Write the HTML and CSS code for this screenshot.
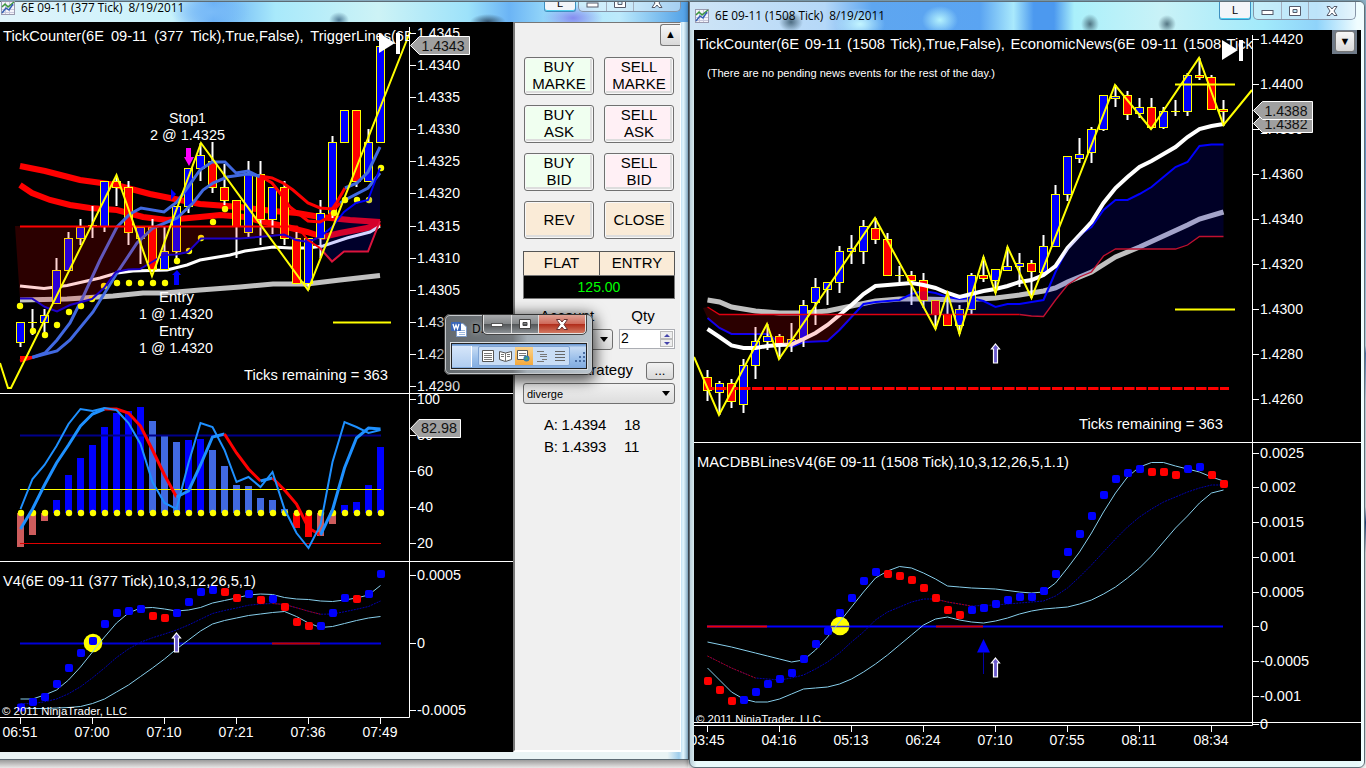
FILE: index.html
```
<!DOCTYPE html>
<html lang="en">

<head>
  <meta charset="utf-8">
  <title>6E 09-11 Charts</title>
  <link rel="stylesheet" href="styles.css">
</head>

<body>
  <div class="desktop">

    <div class="window window-left">
      <div class="titlebar">
        <svg class="app-icon" width="14" height="14" viewBox="0 0 14 14">
          <rect x=".5" y=".5" width="13" height="13" fill="#f4f4fa" stroke="#9a9ab0" />
          <path d="M1 4.500H13M1 8.500H13M1 11.500H13M4.500 1V13M8.500 1V13" stroke="#c9c9dd" />
          <path d="M1 6L4 3L7 6L13 1" fill="none" stroke="#3c9a3c" stroke-width="1.500" />
          <path d="M1 12L5 7L8 9L12 3" fill="none" stroke="#3460b4" stroke-width="1.500" />
        </svg>
        <span class="title">6E 09-11 (377 Tick)&nbsp; 8/19/2011</span>
        <div class="link-btn">L</div>
        <div class="controls">
          <span><svg width="14" height="12"><rect x="2" y="6" width="11" height="4" fill="#fff" stroke="#555a6a" /></svg></span>
          <span><svg width="14" height="12"><path d="M1.500 1.500H12.500V10.500H1.500ZM5 4.500V7.500H9V4.500Z" fill="#fff" stroke="#555a6a" /></svg></span>
          <span class="wide"><svg width="14" height="12"><path d="M2 1.500H5L7 4L9 1.500H12L9 6L12 10.500H9L7 8L5 10.500H2L5 6Z" fill="#fff" stroke="#555a6a" /></svg></span>
        </div>
      </div>
      <div class="window-body">
        <svg class="chart" id="chart377" width="513" height="730" viewBox="0 22 513 730"></svg>
        <div class="trader">
          <div class="scroll-row"><div class="arrow-btn">&#9650;</div></div>
          <div class="order-grid">
            <div class="order buy">BUY<br>MARKE</div>
            <div class="order sell">SELL<br>MARKE</div>
            <div class="order buy">BUY<br>ASK</div>
            <div class="order sell">SELL<br>ASK</div>
            <div class="order buy">BUY<br>BID</div>
            <div class="order sell">SELL<br>BID</div>
            <div class="order flat">REV</div>
            <div class="order flat">CLOSE</div>
          </div>
          <div class="position">
            <div>FLAT</div>
            <div>ENTRY</div>
          </div>
          <div class="pnl">125.00</div>
          <div class="field-labels">
            <span>Account</span>
            <span>Qty</span>
          </div>
          <div class="fields">
            <div class="select account"><span></span><i></i></div>
            <div class="qty">
              <span>2</span>
              <div class="spin"><b class="up"></b><b class="down"></b></div>
            </div>
          </div>
          <div class="strategy-row">
            <span>ATM Strategy</span>
            <div class="dots-btn">...</div>
          </div>
          <div class="select strategy"><span>diverge</span><i></i></div>
          <div class="quotes">
            <span>A: 1.4394</span><span>18</span>
            <span>B: 1.4393</span><span>11</span>
          </div>
        </div>
      </div>
    </div>

    <div class="window window-right">
      <div class="titlebar">
        <svg class="app-icon" width="14" height="14" viewBox="0 0 14 14">
          <rect x=".5" y=".5" width="13" height="13" fill="#f4f4fa" stroke="#9a9ab0" />
          <path d="M1 4.500H13M1 8.500H13M1 11.500H13M4.500 1V13M8.500 1V13" stroke="#c9c9dd" />
          <path d="M1 6L4 3L7 6L13 1" fill="none" stroke="#3c9a3c" stroke-width="1.500" />
          <path d="M1 12L5 7L8 9L12 3" fill="none" stroke="#3460b4" stroke-width="1.500" />
        </svg>
        <span class="title">6E 09-11 (1508 Tick)&nbsp; 8/19/2011</span>
        <div class="link-btn">L</div>
        <div class="controls">
          <span><svg width="14" height="12"><rect x="2" y="5.500" width="11" height="4" fill="#fff" stroke="#555a6a" /></svg></span>
          <span><svg width="14" height="12"><path d="M1.500 1.500H12.500V10.500H1.500ZM5 4.500V7.500H9V4.500Z" fill="#fff" stroke="#555a6a" /></svg></span>
          <span class="wide"><svg width="14" height="12"><path d="M2 1.500H5L7 4L9 1.500H12L9 6L12 10.500H9L7 8L5 10.500H2L5 6Z" fill="#fff" stroke="#555a6a" /></svg></span>
        </div>
      </div>
      <div class="window-body">
        <svg class="chart" id="chart1508" width="667" height="731" viewBox="694 30 667 731"></svg>
        <div class="chart-menu"><div class="arrow-btn">&#9660;</div></div>
      </div>
    </div>

    <div class="window-word">
      <div class="word-top">
        <svg width="16" height="16" viewBox="0 0 16 16">
          <path d="M5.500 2.500H12L15.500 6V15.500H5.500Z" fill="#fff" stroke="#7d9cc9" />
          <path d="M8 9.500H14M8 11.500H14M8 13.500H14" stroke="#9db8dd" />
          <rect x="0" y="1" width="10" height="9" rx="1" fill="#3a66b8" />
          <path d="M2 3L3.500 8L5 4L6.500 8L8 3" fill="none" stroke="#fff" stroke-width="1.300" />
        </svg>
        <span class="word-title">D.</span>
        <div class="word-controls">
          <span><svg width="12" height="10"><rect x=".5" y="4.500" width="11" height="3" fill="#fff" stroke="#555" /></svg></span>
          <span><svg width="12" height="10"><path d="M.5 .5H11.500V9.500H.5ZM4 3.500V6.500H8V3.500Z" fill="#fff" stroke="#444" /></svg></span>
          <span class="close"><svg width="12" height="11"><path d="M.5 .5H4L6 3L8 .5H11.500L8 5.500L11.500 10.500H8L6 8L4 10.500H.5L4 5.500Z" fill="#fff" stroke="#633" /></svg></span>
        </div>
      </div>
      <div class="word-status">
        <div class="word-tab"></div>
        <div class="views">
          <span><svg width="12" height="12"><path d="M.5 .5H11.500V11.500H.5Z" fill="#fff" stroke="#555" /><path d="M2 3.500H10M2 5.500H10M2 7.500H10M2 9.500H10" stroke="#777" /></svg></span>
          <span><svg width="13" height="12"><path d="M.5 1.500L6.500 3L12.500 1.500V9.500L6.500 11.500L.5 9.500Z" fill="#fff" stroke="#555" /><path d="M6.500 3V11M2 4.500H5M2 6.500H5M8 4.500H11M8 6.500H11" stroke="#777" /></svg></span>
          <span class="on"><svg width="13" height="12"><path d="M.5 .5H10.500V9.500H.5Z" fill="#fff" stroke="#555" /><path d="M2 3.500H9M2 5.500H9" stroke="#777" /><circle cx="9.500" cy="8.500" r="3" fill="#2f7fb0" /><path d="M8 8l2-1 1 2-2 1z" fill="#4fae5a" /></svg></span>
          <span><svg width="12" height="12"><path d="M1 1.500H8M4 4.500H11M4 6.500H11M6 9.500H11M1 11.500H8" stroke="#777" /></svg></span>
          <span><svg width="12" height="12"><path d="M1 1.500H11M1 4.500H11M1 7.500H11M1 10.500H11" stroke="#666" /></svg></span>
        </div>
        <svg class="grip" width="12" height="12"><path d="M8 0h2v2h-2zM4 4h2v2h-2zM8 4h2v2h-2zM0 8h2v2h-2zM4 8h2v2h-2zM8 8h2v2h-2z" fill="#4a6ea3" /></svg>
      </div>
    </div>

  </div>
  <script src="charts.js"></script>
</body>

</html>
```

FILE: styles.css
```
body {
  margin: 0;
  font-family: "Liberation Sans", Arial, sans-serif;
  font-size: 14px;
  color: #000;
}

.desktop {
  position: relative;
  width: 1366px;
  height: 768px;
  overflow: hidden;
  background: linear-gradient(#8fb4c8 0, #6ba4d8 20%, #bfe0ee 45%, #4a7ab5 46%, #c5dbe8 52%, #d5e2e6 66%, #17427e 68%, #d9e0e2 72%, #e4e4e4 96%, #f6f6f6 100%);
}

/* windows */

.window {
  position: absolute;
  box-sizing: border-box;
  display: flex;
  flex-direction: column;
}

.window-left {
  left: -1px;
  top: 1px;
  width: 690px;
  height: 759px;
  border: 1px solid #5d6b74;
  border-right-color: #4d5a66;
  background: linear-gradient(90deg, #eaf4f5 0, #eaf4f5 97%, #9fcdec 98.7%, #e6f7fd 99.3%, #9bc8e6 100%);
  box-shadow: 0 3px 6px rgba(0, 0, 0, .45);
}

.window-left::after {
  content: "";
  position: absolute;
  left: 0;
  right: 0;
  bottom: -10px;
  height: 9px;
  background: linear-gradient(#9b9b9b, #f3f1f1);
}

.window-right {
  left: 689px;
  top: 1px;
  width: 676px;
  height: 767px;
  padding: 0 3px 0 4px;
  border: 1px solid #5f6f78;
  border-radius: 0 6px 6px 6px;
  background: linear-gradient(90deg, #b9cfd9 0, #e9fafb 1%, #e7f9fa 99%, #f1ffff 100%);
  box-shadow: -1px 0 4px rgba(0, 0, 0, .4);
}

.titlebar {
  display: flex;
  flex: none;
  height: 20px;
  box-sizing: border-box;
  background:
    radial-gradient(ellipse 40px 16px at 210px 10px, #7bbcf8, transparent),
    radial-gradient(ellipse 10px 8px at 339px 18px, #527f9a, transparent),
    radial-gradient(ellipse 18px 8px at 488px 20px, #31506b, transparent),
    radial-gradient(ellipse 30px 14px at 573px 16px, #858cf0, transparent),
    linear-gradient(90deg, #e2f4fb 0, #c8f2fb 25%, #62aaf4 31%, #a8e9fb 40%, #cdf3f6 55%, #9de2fa 68%, #6bb4f5 74%, #a9e8fb 82%, #bdeafc 90%, #4f9fe6 100%);
}

.window-right .titlebar {
  height: 28px;
  margin: 0 -3px 0 -4px;
  padding: 0 8px 0 5px;
  border-radius: 0 5px 0 0;
  background:
    radial-gradient(ellipse 12px 10px at 101px 20px, #4d6c82, transparent),
    radial-gradient(ellipse 25px 16px at 170px 22px, #c3f5ff, transparent),
    radial-gradient(ellipse 18px 14px at 250px 18px, #b4f2fd, transparent),
    radial-gradient(ellipse 9px 10px at 400px 22px, #4f7482, transparent),
    radial-gradient(ellipse 9px 9px at 477px 22px, #547683, transparent),
    linear-gradient(90deg, #cfe5f6 0, #b5d8f8 20%, #5ea6f0 27%, #5aa4f2 43%, #a9e9fc 48%, #4c99ef 51%, #4c99ef 54%, #aaf0fb 57%, #c9f2f7 70%, #a2eafb 85%, #8fd3fa 93%, #f0fdff 99%);
}

.app-icon {
  margin: -1px 6px 0 1px;
}

.window-right .app-icon {
  margin: 7px 6px 0 0;
}

.title {
  flex: 1;
  margin-top: -3px;
  font-family: "Open Sans", "Noto Sans", sans-serif;
  font-size: 11.8px;
  line-height: 16px;
  letter-spacing: -.02px;
  white-space: nowrap;
}

.window-right .title {
  margin-top: 5px;
}

.link-btn {
  box-sizing: border-box;
  width: 32px;
  height: 10px;
  margin-right: 2px;
  border: 1px solid #3d8fc0;
  border-top: 0;
  box-shadow: inset 0 -1px 0 #4fd0f0;
  border-radius: 0 0 3px 3px;
  background: #f3f5f9;
  font-size: 11px;
  line-height: 3px;
  text-align: center;
}

.window-left .link-btn {
  overflow: hidden;
}

.window-right .link-btn {
  height: 18px;
  line-height: 16px;
}

.controls {
  display: flex;
  box-sizing: border-box;
  width: 103px;
  height: 10px;
  margin-right: 7px;
  overflow: hidden;
  border: 1px solid #8795a8;
  border-top: 0;
  border-radius: 0 0 5px 5px;
  background: rgba(225, 240, 250, .55);
}

.window-right .controls {
  height: 18px;
  margin-right: 0;
}

.controls span {
  display: flex;
  flex: 27;
  justify-content: center;
  align-items: center;
  border-right: 1px solid #a3afbf;
}

.controls .wide {
  flex: 46;
  border: 0;
}

.window-left .controls span {
  align-items: flex-end;
  padding-bottom: 2px;
}

.window-left .controls svg {
  flex: none;
}

.window-body {
  position: relative;
  display: flex;
  height: 730px;
}

.chart {
  display: block;
  flex: none;
  background: #000;
}

/* order entry panel */

.trader {
  box-sizing: border-box;
  width: 168px;
  padding: 1px 0 0 8px;
  border-left: 2px solid #777;
  border-top: 1px solid #777;
  border-right: 1px solid #fff;
  border-bottom: 2px solid #fff;
  background: #f0f0f0;
}

.scroll-row {
  display: flex;
  justify-content: flex-end;
  height: 33px;
}

.arrow-btn {
  box-sizing: border-box;
  width: 20px;
  height: 22px;
  border: 1px solid #777;
  border-right: 0;
  border-radius: 3px 0 0 3px;
  background: linear-gradient(#f7f7f7, #d9d9d9);
  font-size: 11px;
  line-height: 19px;
  text-align: center;
}

.order-grid {
  display: grid;
  grid-template-columns: 70px 70px;
  gap: 10px;
  padding-left: 1px;
}

.order {
  display: flex;
  box-sizing: border-box;
  height: 38px;
  padding-bottom: 2px;
  justify-content: center;
  align-items: center;
  border: 1px solid #707070;
  border-radius: 3px;
  box-shadow: inset 0 0 0 1px #f8f8f8, inset -1px -1px 0 2px #ddd;
  font-size: 15px;
  line-height: 17px;
  text-align: center;
}

.buy {
  background: #f0fff0;
}

.sell {
  background: #fff0f5;
}

.flat {
  background: #faebd7;
}

.position {
  display: grid;
  grid-template-columns: 75px 75px;
  box-sizing: border-box;
  width: 152px;
  height: 24px;
  margin-top: 12px;
  border: 1px solid #555;
  border-bottom: 0;
  background: #faebd7;
  font-size: 15px;
  line-height: 22px;
  text-align: center;
}

.position div + div {
  border-left: 1px solid #555;
}

.pnl {
  box-sizing: border-box;
  width: 152px;
  height: 24px;
  border: 1px solid #777;
  background: #000;
  color: #0f0;
  line-height: 23px;
  text-align: center;
}

.field-labels {
  display: grid;
  grid-template-columns: 88px 64px;
  margin-top: 7px;
  height: 23px;
  font-size: 15px;
  line-height: 20px;
  text-align: center;
}

.fields {
  display: flex;
  gap: 6px;
}

.select {
  display: flex;
  box-sizing: border-box;
  height: 21px;
  align-items: center;
  justify-content: space-between;
  padding: 0 4px 0 3px;
  border: 1px solid #707070;
  border-radius: 3px;
  background: linear-gradient(#f2f2f2, #ddd);
}

.select i {
  border: 4px solid transparent;
  border-top: 5px solid #000;
  border-bottom: 0;
}

.account {
  width: 90px;
}

.strategy {
  width: 152px;
  font-size: 11px;
}

.qty {
  display: flex;
  box-sizing: border-box;
  width: 56px;
  height: 20px;
  justify-content: space-between;
  padding: 1px 1px 1px 1px;
  border: 1px solid #abadb3;
  background: #fff;
  line-height: 15px;
}

.spin b {
  display: flex;
  box-sizing: border-box;
  width: 13px;
  height: 8px;
  justify-content: center;
  align-items: center;
  border: 1px solid #bbb;
  background: #eee;
}

.spin b::after {
  content: "";
  border: 3px solid transparent;
}

.up::after {
  margin-top: -3px;
  border-bottom-color: #44a !important;
}

.down::after {
  margin-bottom: -3px;
  border-top-color: #44a !important;
}

.strategy-row {
  display: flex;
  width: 151px;
  margin-top: 12px;
  height: 21px;
  justify-content: flex-end;
  gap: 13px;
  font-size: 15px;
  line-height: 16px;
}

.dots-btn {
  box-sizing: border-box;
  width: 28px;
  height: 18px;
  border: 1px solid #707070;
  border-radius: 3px;
  background: linear-gradient(#f2f2f2, #d8d8d8);
  font-size: 13px;
  line-height: 15px;
  text-align: center;
}

.quotes {
  display: grid;
  grid-template-columns: 80px 40px;
  margin: 10px 0 0 21px;
  font-size: 15px;
  letter-spacing: -.25px;
  line-height: 22px;
  white-space: nowrap;
}

.chart-menu {
  position: absolute;
  right: 4px;
  top: 0;
  padding: 1px 2px 2px 3px;
  background: #6f7a88;
}

.chart-menu .arrow-btn {
  border-right: 1px solid #777;
  border-radius: 3px;
  height: 21px;
}

/* minimised word window */

.window-word {
  position: absolute;
  left: 444px;
  top: 314px;
  box-sizing: border-box;
  width: 149px;
  height: 61px;
  padding: 0 6px;
  border: 1px solid #e1e4e6;
  outline: 1px solid #333;
  outline-offset: -1px;
  border-radius: 6px;
  background: linear-gradient(90deg, #646a6e 0, #74797d 46%, #a4aeb6 56%, #b9c4cc 100%);
  box-shadow: inset 0 0 0 1px #c5c9cc, 0 3px 14px 3px rgba(0, 0, 0, .65);
}

.word-top {
  display: flex;
  height: 28px;
}

.word-top > svg {
  flex: none;
  margin: 6px 5px 0 0;
}

.word-title {
  flex: none;
  width: 11px;
  margin-top: 5px;
  font-family: "Open Sans", sans-serif;
  font-size: 12px;
  line-height: 17px;
  text-shadow: 0 0 5px #ccc;
}

.word-controls {
  display: flex;
  flex: none;
  box-sizing: border-box;
  width: 103px;
  height: 19px;
  overflow: hidden;
  border: 1px solid #e3e3e3;
  border-top: 0;
  outline: 1px solid #444;
  border-radius: 0 0 4px 4px;
  background: linear-gradient(#a9abad, #85888a 48%, #515456 50%, #8b9094);
}

.word-controls span {
  display: flex;
  flex: 27;
  justify-content: center;
  align-items: center;
  border-right: 1px solid #ddd;
}

.word-controls .close {
  flex: 46;
  border: 0;
  background: linear-gradient(#dea295, #cf6a5b 48%, #b02a18 50%, #d27a63);
}

.word-status {
  display: flex;
  box-sizing: border-box;
  width: 136px;
  height: 26px;
  align-items: center;
  border: 1px solid #222;
  outline: 1px solid #d9dde0;
  background: linear-gradient(#5f8fcc, #c5daf3 15%, #9cc0ea 60%, #81abdf);
}

.word-tab {
  width: 20px;
  height: 21px;
  border-right: 1px solid #fff;
  background: linear-gradient(#d6e6fa, #b0cdf0);
}

.views {
  display: flex;
  height: 18px;
  margin-left: 6px;
  border: 1px solid #7ea3d4;
  border-radius: 2px;
  background: #c9ddf5;
}

.views span {
  display: flex;
  width: 18px;
  justify-content: center;
  align-items: center;
}

.views .on {
  background: linear-gradient(#fbd28a, #f5a93c);
}

.grip {
  margin: 4px 0 0 5px;
}
```

FILE: charts.js
```
const NS = "http://www.w3.org/2000/svg";

const make = (svg, tag, attrs, text) => {
  const el = document.createElementNS(NS, tag);
  for (const key in attrs) {
    el.setAttribute(key, attrs[key]);
  }
  if (text !== undefined) {
    el.textContent = text;
  }
  svg.appendChild(el);
  return el;
};

const line = (svg, points, color, width, extra) => {
  make(svg, "polyline", Object.assign({ points: points, fill: "none", stroke: color, "stroke-width": width }, extra));
};

const area = (svg, points, color) => make(svg, "polygon", { points: points, fill: color });

const label = (svg, x, y, text, width, extra) => {
  const attrs = { x: x, y: y, fill: "#fff", "font-size": 15, "font-family": "Liberation Sans, Arial, sans-serif" };
  if (width) {
    attrs.textLength = width;
    attrs.lengthAdjust = "spacingAndGlyphs";
  }
  make(svg, "text", Object.assign(attrs, extra), text);
};

const dot = (svg, x, y, color) => {
  make(svg, "rect", { x: x - 4, y: y - 4, width: 8, height: 8, rx: 2, fill: color });
};

// series given as one y value per bar
const series = (values, x0, from = 0) => values.map((y, i) => (x0 + (i + from) * 12) + "," + y).join(" ");

// series given as [bar, y] pairs
const sparse = (pairs, x0) => pairs.map(p => (x0 + p[0] * 12) + "," + p[1]).join(" ");

// [high, body top, body bottom, low, up]
const candles = (svg, rows, x0) => {
  rows.forEach((c, i) => {
    const x = x0 + i * 12;
    line(svg, `${x},${c[0]} ${x},${c[3]}`, "#fff", 2);
    if (c[2] - c[1] < 1) {
      line(svg, `${x - 4.5},${c[1] + .5} ${x + 4.5},${c[1] + .5}`, "#ff0", 1);
      return;
    }
    make(svg, "rect", {
      x: x - 4, y: c[1] + .5, width: 8, height: c[2] - c[1],
      fill: c[4] ? "#00f" : "#f00", stroke: "#ff0", "stroke-width": 1
    });
  });
};

const priceTag = (svg, x, y, text) => {
  make(svg, "polygon", {
    points: `${x},${y} ${x + 9},${y - 9} ${x + 59},${y - 9} ${x + 59},${y + 9} ${x + 9},${y + 9}`,
    fill: "#a0a0a0", stroke: "#fff"
  });
  label(svg, x + 11, y + 5, text, text.length > 5 ? 43 : 36, { fill: "#111" });
};

const upArrow = (svg, x, y) => {
  make(svg, "polygon", {
    points: `${x},${y} ${x + 4},${y + 5} ${x + 2},${y + 5} ${x + 2},${y + 19} ${x - 2},${y + 19} ${x - 2},${y + 5} ${x - 4},${y + 5}`,
    fill: "#6a5acd", stroke: "#fff", "stroke-width": 1.2
  });
};

const playIcon = (svg, x, y) => {
  area(svg, `${x},${y} ${x + 16},${y + 10} ${x},${y + 20}`, "#fff");
  make(svg, "rect", { x: x + 17, y: y, width: 4, height: 21, fill: "#fff" });
};

const ticks = (svg, x, rows) => {
  rows.forEach(r => {
    line(svg, `${x},${r[0] + .5} ${x + 6},${r[0] + .5}`, "#fff", 1);
    label(svg, x + 7, r[0] + 5, r[1], r[2]);
  });
};

const times = (svg, x0, y, list) => {
  list.forEach((t, i) => {
    const x = x0 + i * 72;
    line(svg, `${x},${y} ${x},${y + 6}`, "#fff", 1);
    label(svg, x - 18, y + 19, t, 35);
  });
};

// ---- 377 tick ----

const draw377 = () => {
  const svg = document.getElementById("chart377");
  const X = 20.5;

  line(svg, "20,166 45,171 80,180 116,185 150,194 170,198 200,204 240,207 273,211 297,213 320,217 350,220 380,222", "#f00", 6);
  line(svg, "20,185 32,193 50,200 70,205 90,208 117,210 143,217 167,220 200,217 220,215 245,217 260,221 283,226 307,232 323,237 340,233 367,228 380,223", "#f00", 6);
  line(svg, "20,300 67,299 113,296 143,293 165,293 200,290 240,287 273,284 307,284 340,280 380,275.5", "#c0c0c0", 5);
  line(svg, "20,286 44,288.500 67,285.500 100,278 117,273 133,271 167,270 187,265 200,260 230,255 245,251 273,247 290,248 308,248 323,246 347,238 370,232 380,226", "#fff", 3);

  candles(svg, [
    [322, 322, 342, 347, 1], [309, 322, 322, 335, 1], [309, 315, 322, 335, 1], [258, 270, 303, 303, 1],
    [232, 238, 270, 270, 1], [219, 227, 238, 245, 1], [206, 225, 225, 238, 1], [181, 181, 226, 232, 1],
    [176, 181, 187, 206, 0], [181, 187, 232, 245, 0], [227, 227, 238, 264, 1], [219, 227, 269, 269, 0],
    [227, 251, 269, 269, 1], [206, 206, 251, 264, 1], [168, 168, 206, 213, 1], [143, 155, 168, 181, 1],
    [142, 161, 187, 193, 0], [164, 187, 200, 205, 0], [200, 200, 226, 258, 0], [161, 174, 232, 238, 1],
    [161, 174, 219, 245, 0], [187, 187, 219, 234, 1], [181, 187, 238, 245, 0], [232, 238, 283, 283, 0],
    [238, 238, 283, 290, 1], [200, 213, 238, 258, 1], [136, 142, 213, 218, 1], [110, 110, 142, 142, 1],
    [110, 110, 181, 187, 0], [129, 142, 181, 181, 1], [46, 46, 142, 142, 1]
  ], X);

  line(svg, "32,357.500 45,353 57,340 70,323 83,297 100,260 117,227 130,214 141,208 164,212 177,202 188,187 200,170 212,162 225,162 236,173 248,171 260,177", "#4169e1", 3);
  line(svg, "32,357.500 57,351 70,340 93,312 117,273 137,243 153,228 177,218 193,203 203,190 213,183 227,177 248,174 260,176", "#4169e1", 3);
  line(svg, "260,176 272,178 283,183 293,190 308,203 320,208 332,209 337,202 345,188", "#f00", 3);
  line(svg, "260,176 272,183 283,197 290,207 308,221 320,222 327,218 340,203", "#f00", 3);
  line(svg, "345,188 357,183 368,172 380,147", "#4169e1", 3);
  line(svg, "340,203 345,200 368,188 380,173", "#4169e1", 3);
  line(svg, "20,357.500 32,357.500", "#f00", 3);
  line(svg, "20,361 32,357.500", "#f00", 3);

  [[20, 306], [33, 331], [45, 335], [57, 325], [69, 312], [81, 306], [92, 299], [104, 286], [117, 283], [129, 283],
    [141, 283], [153, 283], [165, 283], [177, 261], [189, 251], [201, 238], [213, 222], [225, 209],
    [334, 213], [345, 200], [357, 200], [369, 200], [381, 168]].forEach(p => {
    make(svg, "circle", { cx: p[0], cy: p[1], r: 3.2, fill: "#ff0" });
  });

  area(svg, "15,226 297,226 308,241 296,239 284,234 270,236 240,238 201,238 188,252 176,254.500 164,255 152,262 140,269 128,270 116,272 104,288 92,299 70,305 57,311.500 45,307 32,299 20,299", "rgba(255,0,0,.17)");
  area(svg, "308,241 320,237 332,227 344,212 356,203 368,200 380,170 380,221 368,251 344,251 332,261.500 320,247", "rgba(0,0,255,.17)");
  line(svg, "20,298.500 32,298.500 45,307 57,311.500 70,305 92,299 104,288 116,272 128,269.500 140,269 152,262 164,255 176,254.500 188,252 201,238.500 240,238.500 270,236 284,234.500 296,240 308,242 320,237", "#1e00c8", 2);
  line(svg, "320,237 332,227 344,212 356,203 368,200 380,168", "#00f", 2);
  line(svg, "20,226.500 297,226.500 308,240 320,248", "#f00", 2);
  line(svg, "320,248 332,261.500 344,251.500 368,251.500 380,221", "#dc143c", 2);
  line(svg, "0,363 8,388 11,388 116.500,175 152,276 201,143 308,290 410,32", "#ff0", 2);
  line(svg, "333,322.500 391,322.500", "#ff0", 2);

  area(svg, "186,148 191,148 191,157 194,157 189,166 184,157 186,157", "#f0f");
  area(svg, "171,189 176,194 171,200", "#00f");
  area(svg, "177,270 181,275 179,275 179,285 174,285 174,275 172,275", "#00f");

  label(svg, 169, 123, "Stop1", 37);
  label(svg, 150, 140, "2 @ 1.4325", 75);
  label(svg, 159, 302, "Entry", 35);
  label(svg, 139, 319, "1 @ 1.4320", 74);
  label(svg, 159, 336, "Entry", 35);
  label(svg, 139, 353, "1 @ 1.4320", 74);
  label(svg, 244, 380, "Ticks remaining = 363", 144);

  // header runs under the price axis
  const clip = make(svg, "clipPath", { id: "header377" });
  make(clip, "rect", { x: 0, y: 22, width: 409, height: 30 });
  const head = make(svg, "g", { "clip-path": "url(#header377)" });
  label(head, 3, 41, "TickCounter(6E 09-11 (377 Tick),True,False), TriggerLines(6E 09-11", 454, { "word-spacing": 3 });
  playIcon(svg, 379, 33);

  // stochastics panel
  line(svg, "0,393.500 513,393.500", "#fff", 1);
  line(svg, "0,561.500 513,561.500", "#fff", 1);
  const up = "#00f", weak = "#4169e1", down = "#f00", soft = "#cd5c5c";
  [[547, soft], [535, soft], [521, soft], [500, up], [475, up], [458, up], [445, up], [427, up], [413, up], [411, up],
    [407, up], [421, weak], [436, weak], [442, weak], [440, up], [439, up], [450, weak], [466, weak], [485, weak],
    [486, weak], [498, weak], [500, weak], [509, weak], [528, down], [537, down], [536, soft], [524, soft],
    [505, up], [502, up], [485, up], [447, up]].forEach((b, i) => {
    make(svg, "rect", { x: 17 + i * 12, y: Math.min(b[0], 513), width: 7, height: Math.abs(513 - b[0]), fill: b[1] });
  });
  line(svg, "20,435.500 381,435.500", "#00008b", 2);
  line(svg, "20,489.500 381,489.500", "#ff0", 1);
  line(svg, "20,543.500 381,543.500", "#e00000", 1);
  for (let i = 0; i < 31; i++) {
    make(svg, "circle", { cx: 21 + i * 12, cy: 513, r: 3.2, fill: "#ff0" });
  }
  const k = [529, 509, 485, 463, 445, 426, 414, 409, 409, 413, 426, 450, 475, 497, 491, 465, 437, 434, 453, 469, 481, 478, 490, 504, 528, 535, 510, 468, 438, 428, 429];
  [[0, 7, 0], [7, 13, 1], [13, 17, 0], [17, 20, 1], [20, 21, 0], [21, 25, 1], [25, 30, 0]].forEach(s => {
    line(svg, series(k.slice(s[0], s[1] + 1), X, s[0]), s[2] ? "#f00" : "#1e90ff", 3);
  });
  line(svg, series([509, 479, 465, 446, 424, 409, 411, 408, 410, 423, 444, 482, 503, 509, 463, 423, 427, 450, 482, 477, 487, 472, 509, 533, 548, 525, 462, 422, 427, 433, 430], X), "#1e90ff", 2);

  // macd panel
  const hi = [699, 699, 695, 690, 680, 667, 652, 637, 623, 613, 608, 607.5, 609, 611, 610, 607.5, 603, 600.5, 598, 595, 594, 594.5, 597.5, 599, 599.5, 601, 601.5, 600, 598, 595, 585.5];
  const lo = [708, 708.5, 708.5, 708, 707.5, 706.5, 703.5, 699, 692, 685, 676.5, 668, 659, 649, 640, 631, 624, 620.5, 618, 615.5, 614, 612.5, 611.5, 616.5, 623, 627.5, 626.5, 623.5, 620.5, 618, 616.5];
  const mid = hi.map((y, i) => (y + lo[i]) / 2);
  line(svg, "20,643.500 381,643.500", "#0000d8", 2);
  line(svg, "272,643.500 320,643.500", "#c00000", 2);
  make(svg, "circle", { cx: 93, cy: 643, r: 9.3, fill: "#ff0" });
  line(svg, series(mid, X), "#0000b0", 1, { "stroke-dasharray": "2 1" });
  line(svg, series(mid.slice(21, 26), X, 21), "#a00", 1, { "stroke-dasharray": "2 1" });
  line(svg, series(hi, X), "#87ceeb", 1);
  line(svg, series(lo, X), "#87ceeb", 1);
  const red = [11, 12, 17, 18, 20, 22, 23, 24, 28];
  [707.5, 702, 697, 684, 668, 653, 641, 624, 613, 611, 609, 616, 618, 613, 602, 592, 590, 592, 598, 594, 600, 599, 607, 622, 626, 626, 613, 598, 599, 594, 574].forEach((y, i) => {
    dot(svg, 21 + i * 12, y, red.includes(i) ? "#f00" : "#00f");
  });
  upArrow(svg, 176.5, 633);
  label(svg, 3, 586, "V4(6E 09-11 (377 Tick),10,3,12,26,5,1)", 253);
  label(svg, 2, 715, "© 2011 NinjaTrader, LLC", 125, { "font-size": 11 });

  line(svg, "409.500,27 409.500,717.500 0,717.500", "#fff", 1);
  ticks(svg, 410, [
    [33, "1.4345", 43], [65, "1.4340", 43], [97, "1.4335", 43], [129, "1.4330", 43], [161, "1.4325", 43],
    [193, "1.4320", 43], [226, "1.4315", 43], [258, "1.4310", 43], [290, "1.4305", 43], [322, "1.4300", 43],
    [354, "1.4295", 43], [386, "1.4290", 43], [399, "100", 23], [435, "80", 16], [471, "60", 16], [507, "40", 16],
    [543, "20", 16], [575, "0.0005", 44], [643, "0", 8], [710, "-0.0005", 49]
  ]);
  times(svg, 20.5, 718, ["06:51", "07:00", "07:10", "07:21", "07:36", "07:49"]);
  priceTag(svg, 410.5, 45.5, "1.4343");
  make(svg, "polygon", { points: "410.500,428.500 419,419.500 460.500,419.500 460.500,437.500 419,437.500", fill: "#a0a0a0", stroke: "#fff" });
  label(svg, 421, 433, "82.98", 36, { fill: "#111" });
};

// ---- 1508 tick ----

const draw1508 = () => {
  const svg = document.getElementById("chart1508");
  const X = 707.5;

  line(svg, sparse([[0, 300], [1, 302], [2, 307], [4, 311], [6, 313], [8, 313], [10, 311], [12, 306], [14, 301], [16, 299], [18, 299], [21, 300], [24, 298], [26, 295], [28, 291], [29, 288], [30, 282], [32, 272], [34, 257], [36, 247], [38, 236], [40, 225], [41, 219], [43, 212]], X), "#c0c0c0", 5);

  const blue = [[0, 318], [1, 328], [2, 334], [5, 334], [6, 342], [7, 347], [8, 342], [10, 341], [11, 330], [12, 317], [13, 304], [14, 302], [16, 300], [17, 294], [18, 291], [19, 293], [20, 297], [21, 299], [22, 298], [23, 301], [24, 307], [25, 304], [26, 304], [27, 302], [28, 300], [29, 272], [30, 248], [31, 235], [32, 227], [33, 210], [34, 200], [35, 200], [36, 194], [37, 187], [38, 177], [39, 167], [40, 162], [41, 146], [42, 144.5], [43, 144.5]];
  const base = [[0, 307], [1, 314.5], [26, 314.5], [27, 316], [28, 316.5], [29, 300], [30, 285], [31, 277], [32, 272], [33, 256], [34, 249], [39, 249], [40, 245], [41, 236.5], [43, 236.5]];
  line(svg, sparse(blue, X), "#00f", 2);

  candles(svg, [
    [370, 377, 390, 401, 0], [381, 383, 392, 415, 1], [379, 383, 401, 408, 0], [359, 365, 404, 413, 1],
    [327, 341, 365, 379, 1], [324, 336, 341, 350, 1], [334, 336, 343, 359, 0], [323, 339, 343, 352, 1],
    [300, 305, 338, 347, 1], [278, 287, 302, 325, 1], [282, 282, 289, 305, 1], [246, 251, 282, 293, 1],
    [235, 248, 251, 264, 1], [220, 226, 251, 264, 1], [218, 228, 239, 244, 0], [233, 239, 275, 275, 0],
    [266, 275, 275, 282, 1], [271, 275, 280, 305, 0], [273, 280, 300, 308, 0], [300, 300, 314, 329, 0],
    [293, 314, 325, 325, 0], [305, 309, 325, 334, 1], [273, 275, 309, 314, 1], [257, 275, 278, 282, 0],
    [269, 269, 280, 293, 1], [247, 266, 270, 271, 1], [253, 263, 266, 287, 1], [260, 263, 271, 298, 0],
    [235, 246, 272, 275, 1], [185, 194, 246, 246, 1], [156, 156, 194, 201, 1], [138, 154, 158, 163, 1],
    [127, 129, 152, 163, 1], [95, 95, 129, 131, 1], [85, 96, 98, 107, 1], [91, 95, 114, 120, 0],
    [98, 107, 113, 118, 1], [98, 107, 127, 129, 0], [107, 111, 127, 129, 1], [100, 111, 111, 116, 1],
    [73, 75, 111, 116, 1], [58, 75, 77, 80, 0], [75, 77, 109, 110, 0], [100, 109, 111, 126, 0]
  ], X);

  line(svg, series([329, 337, 345.5, 348, 348, 346, 345, 344.5, 339, 333, 325, 315, 305, 294, 286, 285, 284, 283, 285, 288, 293, 297, 294, 291, 289, 286, 282, 280, 275, 266, 248, 235, 222, 203, 188, 177, 167, 161, 154, 147, 137, 129, 126, 124], X), "#fff", 4);

  area(svg, "703,308 " + sparse(base.slice(0, 2), X) + " 854,314.500 " + sparse(blue.slice(0, 10).reverse(), X), "rgba(255,0,0,.17)");
  area(svg, "854,314.500 " + sparse(blue.slice(10), X) + " " + sparse(base.slice(2).reverse(), X), "rgba(0,0,255,.15)");
  line(svg, sparse(base.slice(0, 3), X), "#e00010", 1.3);
  line(svg, sparse(base.slice(2), X), "#c01030", 1.3);
  line(svg, "704,388.500 1229,388.500", "#f00", 3, { "stroke-dasharray": "10.500 1.500" });
  line(svg, "694,357 719,415 767,324 779,359 875,218 935.500,329 947.500,293 959.500,334 983.500,257 995.500,293 1007.500,247 1031.500,298 1115,85 1151,129 1199,58 1223.500,125 1252,90", "#ff0", 2);
  line(svg, "1175,84.500 1235,84.500", "#ff0", 2);
  line(svg, "1175,309.500 1235,309.500", "#ff0", 2);
  upArrow(svg, 995.5, 344);
  label(svg, 1079, 429, "Ticks remaining = 363", 144);

  const clip = make(svg, "clipPath", { id: "header1508" });
  make(clip, "rect", { x: 694, y: 30, width: 558, height: 30 });
  const head = make(svg, "g", { "clip-path": "url(#header1508)" });
  label(head, 697, 49, "TickCounter(6E 09-11 (1508 Tick),True,False), EconomicNews(6E 09-11 (1508 Tick", 556, { "word-spacing": 1.5 });
  label(svg, 707, 77, "(There are no pending news events for the rest of the day.)", 288, { "font-size": 11 });
  playIcon(svg, 1222, 40);

  // macd panel
  line(svg, "694,442.500 1361,442.500", "#fff", 1);
  line(svg, "707,626.500 1223,626.500", "#00f", 2);
  line(svg, "707,626.500 767,626.500", "#e00", 2);
  line(svg, "936,626.500 983,626.500", "#c00", 2);
  make(svg, "circle", { cx: 840, cy: 626, r: 9.3, fill: "#ff0" });
  line(svg, "830,626.500 850,626.500", "#2a2ad0", 1.5);
  const mid = [[0, 656], [2, 668], [4, 678], [6, 680], [7, 678], [8, 675], [9, 669], [10, 662], [11, 653], [12, 642], [13, 632], [14, 620], [15, 612], [16, 607], [17, 602], [18, 599], [19, 599], [20, 602], [22, 606], [24, 605], [26, 603], [28, 601], [29, 596], [30, 588], [31, 577], [32, 565], [33, 552], [34, 539], [35, 527], [36, 517], [37, 509], [38, 502], [39, 497], [40, 492], [41, 488], [42, 485], [43, 485]];
  line(svg, sparse(mid, X), "#0000b0", 1, { "stroke-dasharray": "2 1" });
  line(svg, sparse(mid.slice(0, 3), X), "#a00", 1, { "stroke-dasharray": "2 1" });
  line(svg, sparse(mid.slice(16, 19), X), "#a00", 1, { "stroke-dasharray": "2 1" });
  line(svg, sparse([[0, 642], [2, 647], [4, 653], [5, 656], [6, 659], [7, 662], [8, 660], [9, 650], [10, 637], [11, 622], [12, 607], [13, 592], [14, 578], [15, 571], [16, 566.5], [17, 568], [18, 573], [19, 579], [20, 586], [21, 587], [22, 588], [24, 589], [26, 592], [27, 593], [28, 592], [29, 583], [30, 568], [31, 552], [32, 533], [33, 512], [34, 493], [35, 477], [36, 467], [37, 462.5], [38, 462.5], [39, 466], [40, 469], [41, 472], [42, 477], [43, 481]], X), "#87ceeb", 1);
  line(svg, series([668, 680, 692, 699, 702, 702, 699, 694, 689, 688, 687, 684, 679, 672, 664, 655, 645, 635, 625, 619, 617, 620, 622, 623, 621, 618, 614, 611, 609, 608, 607, 604, 600, 594, 587, 578, 568, 556, 542, 528, 516, 503, 493, 490], X), "#87ceeb", 1);
  const red = [0, 1, 2, 15, 16, 17, 18, 19, 20, 21, 37, 38, 39, 42, 43];
  [681, 690, 701, 700, 692, 684, 679, 673, 659, 644, 631, 613, 598, 581, 572, 574, 576, 580, 588, 598, 610, 615, 610, 608, 604, 600, 597, 597, 591, 574, 552, 534, 516, 495, 479, 473, 469, 472, 472, 475, 469, 467, 475, 484].forEach((y, i) => {
    dot(svg, 708 + i * 12, y, red.includes(i) ? "#f00" : "#00f");
  });
  area(svg, "983.500,639 990,652.500 977,652.500", "#00f");
  line(svg, "983.500,652 983.500,674", "#0000a8", 1);
  upArrow(svg, 995.5, 658);
  label(svg, 697, 467, "MACDBBLinesV4(6E 09-11 (1508 Tick),10,3,12,26,5,1.1)", 372);
  label(svg, 696, 723, "© 2011 NinjaTrader, LLC", 125, { "font-size": 11 });
  area(svg, "694,723 1252,723 1252,730 694,730", "#000");

  line(svg, "694,722.500 1361,722.500", "#fff", 1);
  line(svg, "1252.500,35 1252.500,725.500 694,725.500", "#fff", 1);
  ticks(svg, 1253, [
    [39, "1.4420", 43], [84, "1.4400", 43], [129, "1.4380", 43], [174, "1.4360", 43], [219, "1.4340", 43],
    [264, "1.4320", 43], [309, "1.4300", 43], [354, "1.4280", 43], [399, "1.4260", 43],
    [453, "0.0025", 44], [487, "0.002", 36], [522, "0.0015", 44], [557, "0.001", 36], [592, "0.0005", 44],
    [626, "0", 8], [661, "-0.0005", 49], [696, "-0.001", 41], [724, "0", 8]
  ]);
  times(svg, 707.5, 726, ["03:45", "04:16", "05:13", "06:24", "07:10", "07:55", "08:11", "08:34"]);
  priceTag(svg, 1253.5, 123.5, "1.4382");
  priceTag(svg, 1253.5, 110.5, "1.4388");
};

draw377();
draw1508();
```
